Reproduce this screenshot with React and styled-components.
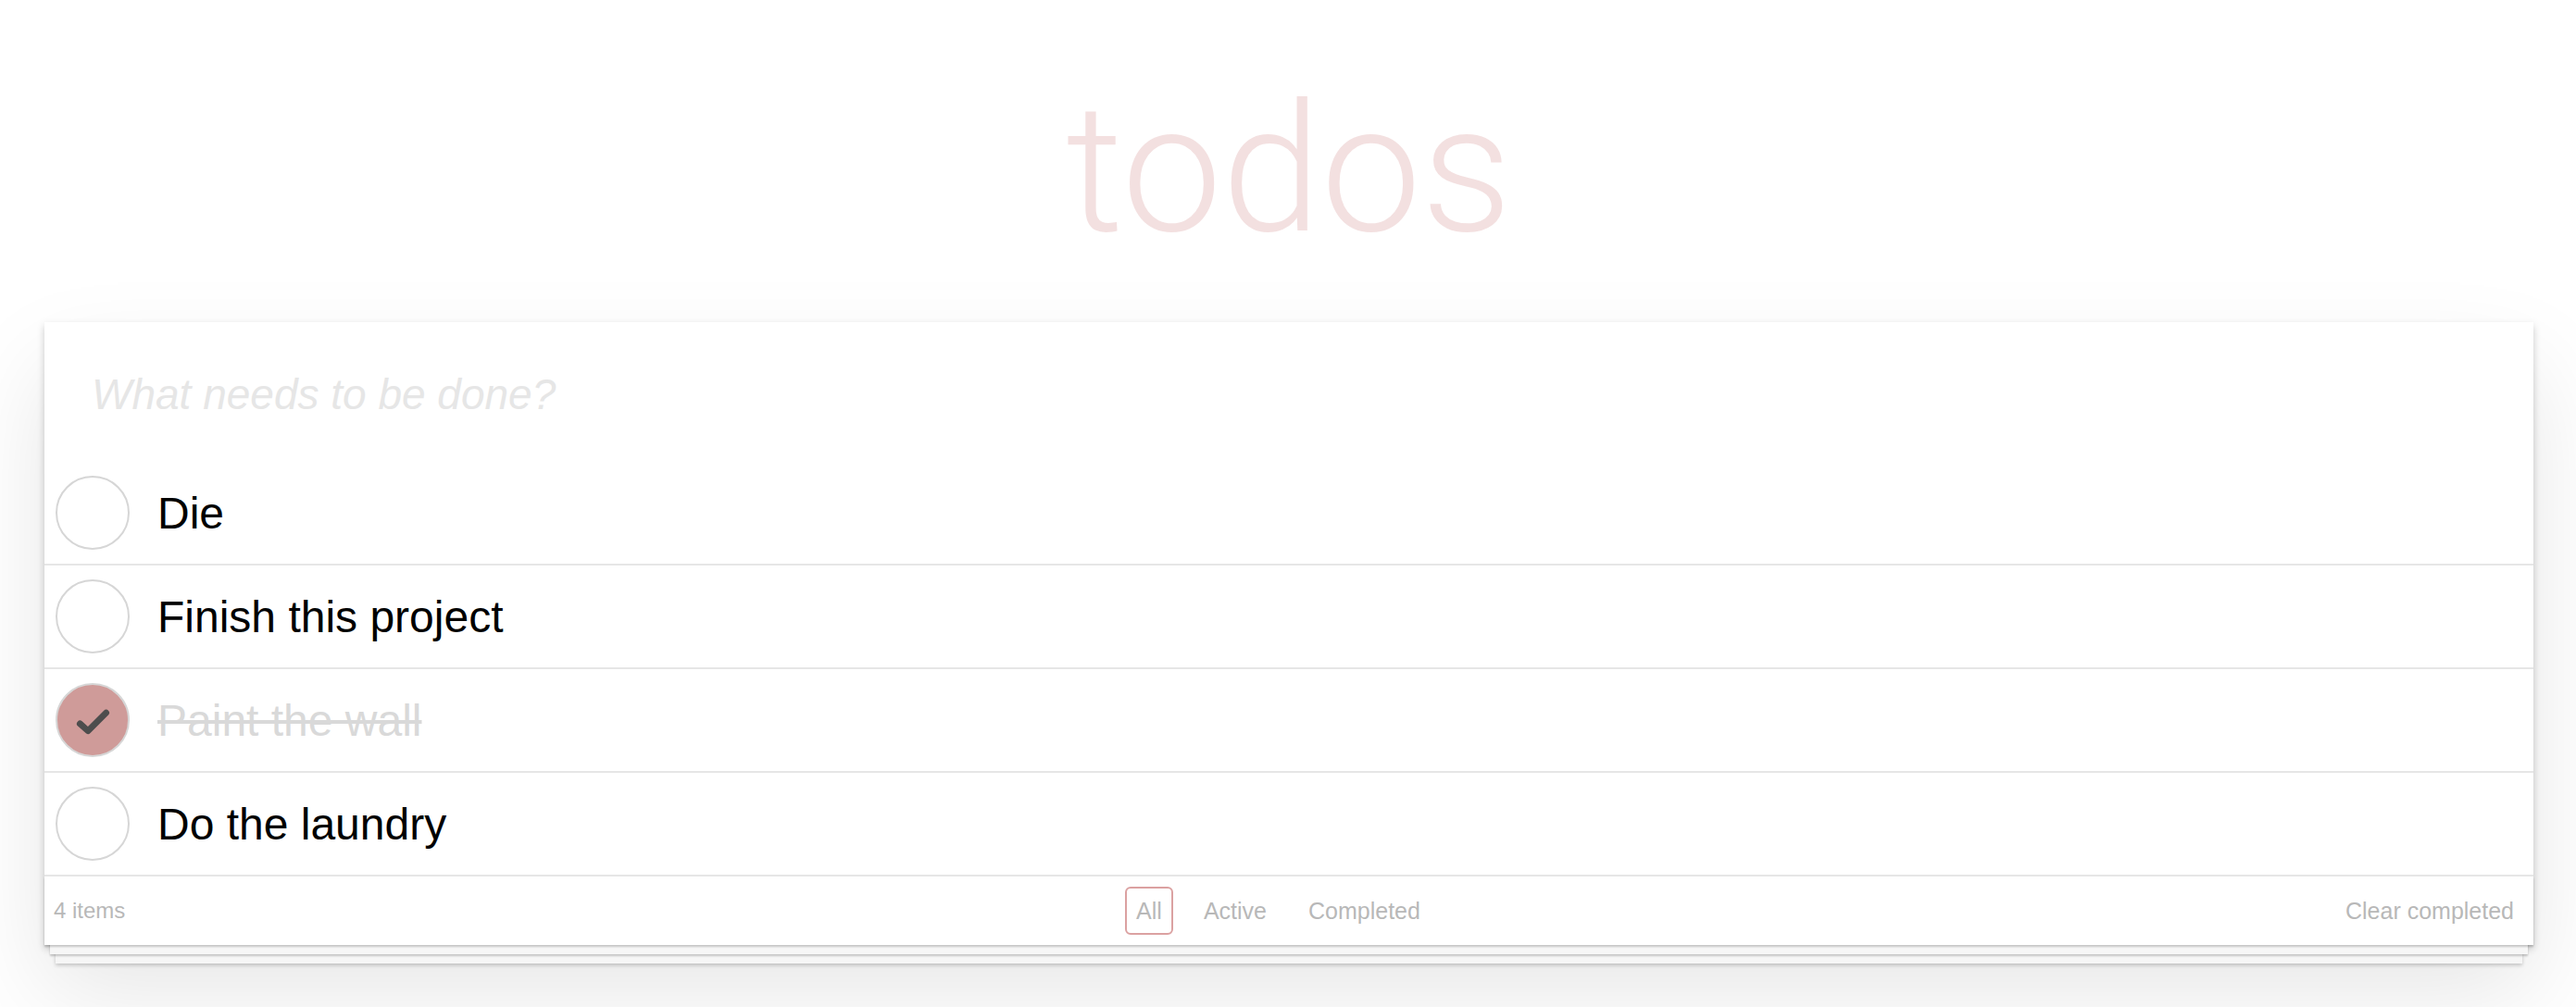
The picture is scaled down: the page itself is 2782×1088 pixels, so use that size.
import styled, { createGlobalStyle } from 'styled-components';

const GlobalStyle = createGlobalStyle`
    html, body {
        margin: 0;
        padding: 0;
        background: #fff;
    }
    body {
        font-family: 'Liberation Sans', Arial, sans-serif;
        color: #000;
    }
`;

const Page = styled.div`
    padding: 87px 46px 80px 48px;
`;

const Title = styled.h1`
    margin: 0;
    height: 193px;
    font-family: Roboto, 'Liberation Sans', sans-serif;
    font-weight: 300;
    font-size: 193px;
    line-height: 193px;
    text-align: center;
    color: rgba(175, 47, 47, 0.15);
`;

const Card = styled.section`
    margin-top: 68px;
    background: #fff;
    position: relative;
    box-shadow: 0 4px 8px 0 rgba(0, 0, 0, 0.2), 0 50px 100px 0 rgba(0, 0, 0, 0.1);
`;

const NewTodo = styled.input`
    display: block;
    box-sizing: border-box;
    width: 100%;
    height: 151px;
    margin: 0;
    padding: 4px 20px 0 51px;
    border: none;
    outline: none;
    background: transparent;
    font-family: 'Liberation Sans', Arial, sans-serif;
    font-size: 46px;
    color: #000;

    &::placeholder {
        font-style: italic;
        color: #e6e6e6;
    }
`;

const List = styled.ul`
    list-style: none;
    margin: 0;
    padding: 0;
`;

const Item = styled.li`
    display: flex;
    align-items: center;
    height: 110px;
    border-bottom: 2px solid #e6e6e6;
`;

const Toggle = styled.span`
    box-sizing: border-box;
    flex: none;
    width: 80px;
    height: 80px;
    margin-left: 12px;
    border-radius: 50%;
    border: 2px solid #d6d6d6;
    background: ${(p) => (p.$checked ? '#cf9b99' : '#fff')};
    display: flex;
    align-items: center;
    justify-content: center;
`;

const Label = styled.label`
    padding-left: 30px;
    font-size: 48px;
    color: ${(p) => (p.$done ? '#d9d9d9' : '#000')};
    text-decoration: ${(p) => (p.$done ? 'line-through' : 'none')};
`;

const Footer = styled.footer`
    position: relative;
    height: 74px;
    display: grid;
    grid-template-columns: 1fr auto 1fr;
    align-items: center;
    padding: 0 21px 0 10px;
    font-size: 24px;
    color: #b8b8b8;

    &::before {
        content: '';
        position: absolute;
        left: 0;
        right: 0;
        bottom: 0;
        height: 74px;
        box-shadow: 0 2px 2px rgba(0, 0, 0, 0.2),
            0 16px 0 -6px #f6f6f6,
            0 18px 2px -6px rgba(0, 0, 0, 0.2),
            0 32px 0 -12px #f6f6f6,
            0 34px 4px -12px rgba(0, 0, 0, 0.2);
        pointer-events: none;
    }
`;

const Count = styled.span`
    justify-self: start;
`;

const Filters = styled.div`
    display: flex;
    gap: 21px;
    margin-right: 12px;
`;

const FilterLink = styled.a`
    padding: 9px 10px;
    line-height: 30px;
    font-size: 25px;
    border: 2px solid ${(p) => (p.$selected ? 'rgba(175, 47, 47, 0.45)' : 'transparent')};
    border-radius: 6px;
    color: #b8b8b8;
    text-decoration: none;
    cursor: pointer;
`;

const ClearButton = styled.button`
    justify-self: end;
    margin: 0;
    padding: 0;
    border: none;
    background: none;
    font-family: inherit;
    font-size: 25px;
    color: #b8b8b8;
    cursor: pointer;
`;

const todos = [
    { id: 1, text: 'Die', done: false },
    { id: 2, text: 'Finish this project', done: false },
    { id: 3, text: 'Paint the wall', done: true },
    { id: 4, text: 'Do the laundry', done: false },
];

function CheckMark() {
    return (
        <svg width="78" height="78" viewBox="0 0 78 78">
            <polyline
                points="25,43 34,51 54,31"
                fill="none"
                stroke="#4d4d4d"
                strokeWidth="7"
                strokeLinecap="round"
                strokeLinejoin="round"
            />
        </svg>
    );
}

export default function App() {
    return (
        <>
            <GlobalStyle />
            <Page>
                <Title>todos</Title>
                <Card>
                    <NewTodo placeholder="What needs to be done?" />
                    <List>
                        {todos.map((todo) => (
                            <Item key={todo.id}>
                                <Toggle $checked={todo.done}>{todo.done && <CheckMark />}</Toggle>
                                <Label $done={todo.done}>{todo.text}</Label>
                            </Item>
                        ))}
                    </List>
                    <Footer>
                        <Count>4 items</Count>
                        <Filters>
                            <FilterLink $selected>All</FilterLink>
                            <FilterLink>Active</FilterLink>
                            <FilterLink>Completed</FilterLink>
                        </Filters>
                        <ClearButton>Clear completed</ClearButton>
                    </Footer>
                </Card>
            </Page>
        </>
    );
}
